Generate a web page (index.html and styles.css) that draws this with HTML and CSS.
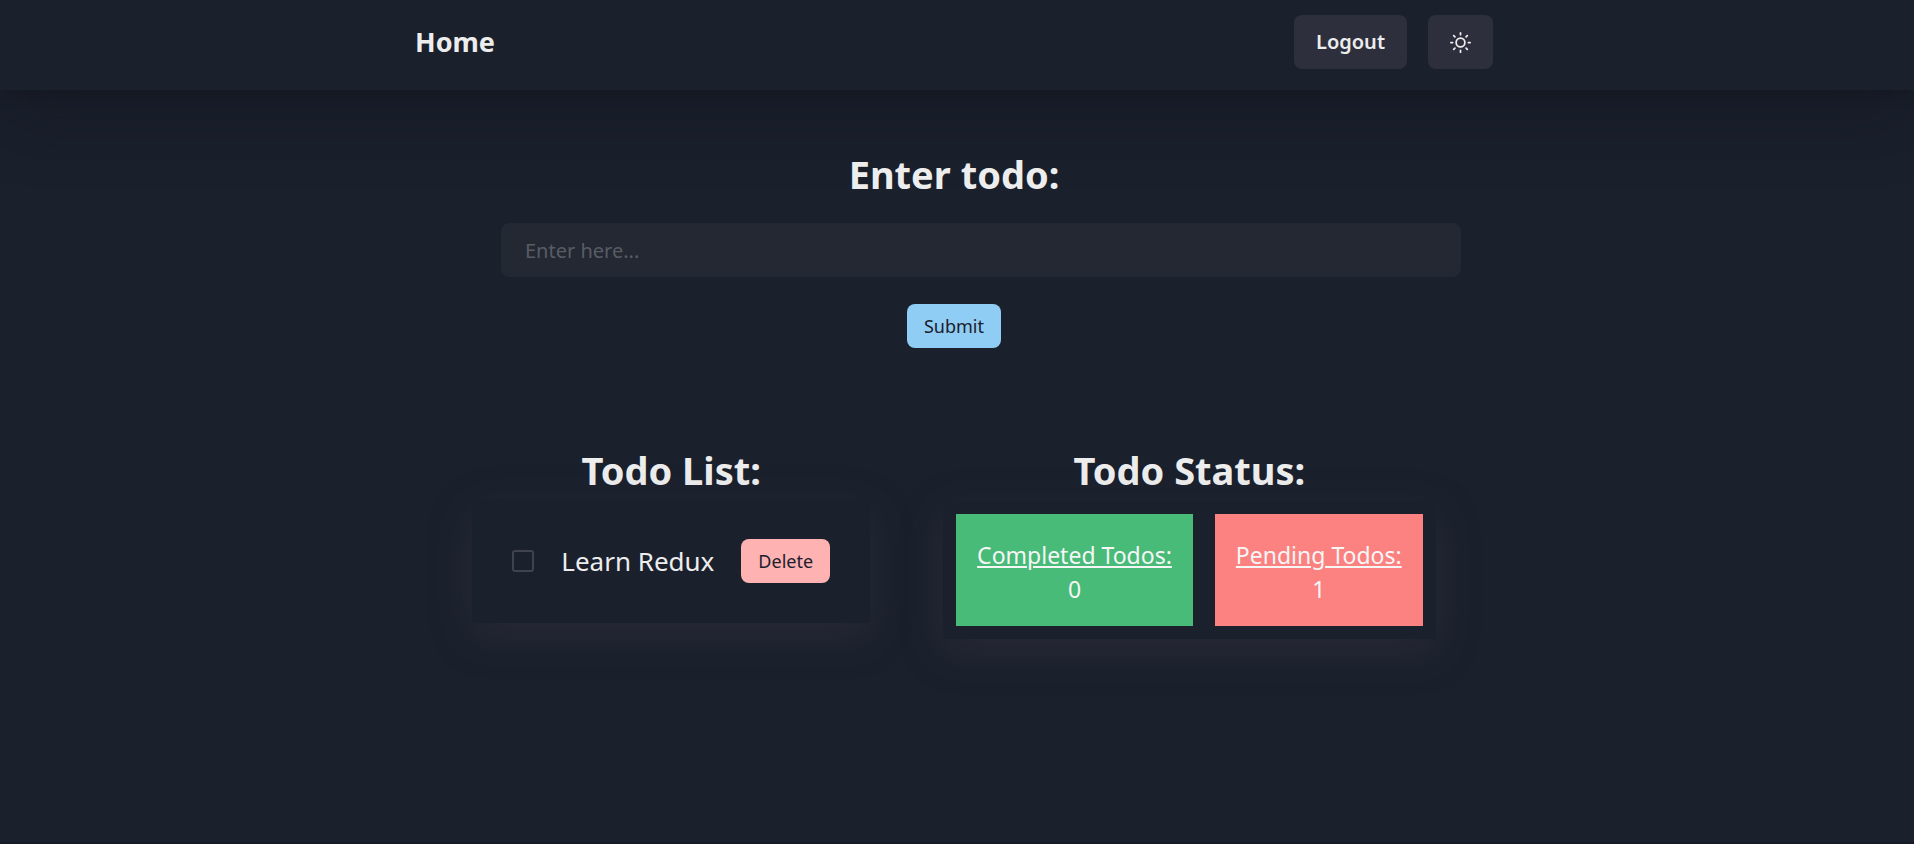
FILE: index.html
```
<!DOCTYPE html>
<html lang="en">
<head>
<meta charset="utf-8">
<meta name="viewport" content="width=device-width, initial-scale=1">
<title>Todo</title>
<link rel="stylesheet" href="styles.css">
</head>
<body>
<header class="header">
  <nav class="nav">
    <a class="brand" href="#">Home</a>
    <div class="actions">
      <button class="nav-button" type="button">Logout</button>
      <button class="nav-button" type="button" aria-label="Toggle color mode">
        <svg class="sun" viewBox="0 0 24 24" fill="none" stroke="currentColor" stroke-width="2" stroke-linecap="round" stroke-linejoin="round" aria-hidden="true"><circle cx="12" cy="12" r="5"/><path d="M12 1v2M12 21v2M4.22 4.22l1.42 1.42M18.36 18.36l1.42 1.42M1 12h2M21 12h2M4.22 19.78l1.42-1.42M18.36 5.64l1.42-1.42"/></svg>
      </button>
    </div>
  </nav>
</header>
<main class="main">
  <form class="form">
    <label class="title" for="todo">Enter todo:</label>
    <input class="field" id="todo" type="text" placeholder="Enter here...">
    <button class="button submit" type="button">Submit</button>
  </form>
  <div class="panels">
    <section class="panel">
      <h2 class="title">Todo List:</h2>
      <div class="card list">
        <input class="check" id="item" type="checkbox">
        <label class="item" for="item">Learn Redux</label>
        <button class="button delete" type="button">Delete</button>
      </div>
    </section>
    <section class="panel">
      <h2 class="title">Todo Status:</h2>
      <div class="card status">
        <div class="stat done"><span class="stat-name">Completed Todos:</span><span>0</span></div>
        <div class="stat pending"><span class="stat-name">Pending Todos:</span><span>1</span></div>
      </div>
    </section>
  </div>
</main>
</body>
</html>
```
FILE: styles.css
```
* { box-sizing: border-box; }
body {
  margin: 0;
  min-height: 100vh;
  background: #1a202c;
  border-bottom: 2px solid #171a26;
  color: #ededee;
  font-family: "Segoe UI", "Noto Sans", sans-serif;
  font-size: 23px;
  line-height: 34px;
}
button, input { font: inherit; color: inherit; }
button { border: 0; cursor: pointer; }
.header {
  padding: 15px 6px 21px 0;
  background: #1b212c;
  box-shadow: 0 27px 68px rgba(16, 12, 20, 0.25), 0 2px 14px rgba(16, 12, 20, 0.3);
}
.nav {
  display: flex;
  align-items: center;
  justify-content: space-between;
  width: 100%;
  max-width: 1078px;
  margin: 0 auto;
}
.brand { color: inherit; font-size: 27px; font-weight: 700; text-decoration: none; }
.actions { display: flex; gap: 21px; }
.nav-button {
  display: flex;
  align-items: center;
  height: 54px;
  padding: 0 22px;
  border-radius: 8px;
  background: #2d303c;
  font-size: 20px;
  font-weight: 600;
}
.sun { width: 21px; height: 21px; }
.main { padding: 57px 6px 54px 0; }
.title { margin: 0; font-size: 38px; font-weight: 700; line-height: 54px; }
.form {
  display: flex;
  flex-direction: column;
  align-items: center;
  width: 100%;
  max-width: 1014px;
  margin: 0 auto;
}
.field {
  align-self: stretch;
  height: 54px;
  margin: 22px 0 27px 54px;
  padding: 0 24px;
  border: 0;
  border-radius: 8px;
  background: #232833;
  font-size: 20px;
}
.field::placeholder { color: #595c64; opacity: 1; }
.button {
  height: 44px;
  padding: 0 17px;
  border-radius: 8px;
  color: #1a202c;
  font-size: 18px;
}
.submit { background: #90cdf4; }
.panels {
  display: flex;
  flex-wrap: wrap;
  justify-content: center;
  align-items: flex-start;
  gap: 73px;
  margin-top: 95px;
}
.panel { display: flex; flex-direction: column; align-items: center; }
.card {
  display: flex;
  align-items: center;
  margin-top: 2px;
  background: #1a202c;
  box-shadow: 0 12px 40px rgba(80, 72, 80, 0.27);
}
.list { gap: 27px; padding: 40px; }
.check {
  appearance: none;
  width: 22px;
  height: 22px;
  margin: 0;
  border: 2px solid #40434e;
  border-radius: 3px;
}
.item { font-size: 26px; }
.delete { background: #feb2b2; }
.status { gap: 22px; margin-top: 4px; padding: 13px; }
.stat {
  display: flex;
  flex-direction: column;
  align-items: center;
  padding: 24px 21px 20px;
  color: #f6f6f6;
}
.stat-name { text-decoration: underline; }
.done { background: #48bb78; }
.pending { background: #fc8181; }
```
